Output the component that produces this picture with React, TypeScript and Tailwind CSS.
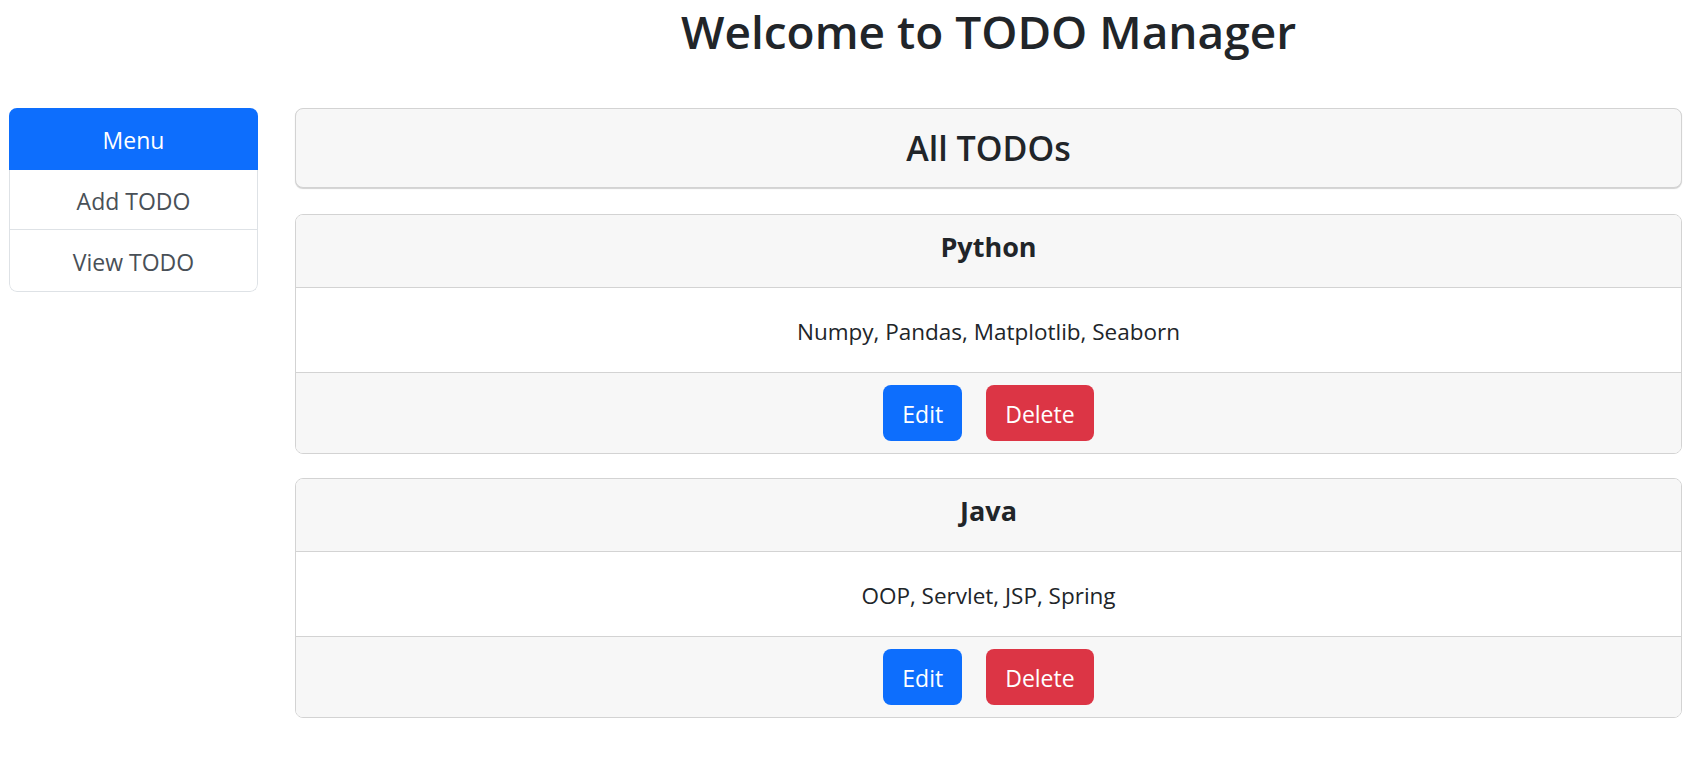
import React from "react";

const todos = [
  { title: "Python", content: "Numpy, Pandas, Matplotlib, Seaborn" },
  { title: "Java", content: "OOP, Servlet, JSP, Spring" },
];

const TodoCard = ({ title, content }: { title: string; content: string }) => {
  return (
    <div className="mb-[24px] overflow-hidden rounded-[8px] border border-[#d3d3d3]">
      <div className="flex h-[73px] items-center justify-center border-b border-[#d3d3d3] bg-[#f7f7f7] pb-[8px]">
        <h4 className="text-[27px] font-bold leading-[34px]">{title}</h4>
      </div>
      <div className="flex h-[85px] items-center justify-center border-b border-[#d3d3d3] bg-white pt-[4px]">
        <p className="text-[22.5px] leading-[34px]">{content}</p>
      </div>
      <div className="flex h-[80px] items-center justify-center gap-[24px] bg-[#f7f7f7]">
        <button className="h-[56px] rounded-[8px] bg-[#0d6efd] px-[19px] pt-[2px] text-[23px] text-white">
          Edit
        </button>
        <button className="h-[56px] rounded-[8px] bg-[#dc3545] px-[19px] pt-[2px] text-[23px] text-white">
          Delete
        </button>
      </div>
    </div>
  );
};

const App = () => {
  return (
    <div className="min-h-screen bg-white font-['Open_Sans','Noto_Sans',sans-serif] text-[#212529]">
      <div className="flex pr-[25px]">
        {/* side menu */}
        <aside className="w-[295px] shrink-0 pl-[9px] pr-[37px] pt-[108px]">
          <div className="overflow-hidden rounded-[8px] text-[23px]">
            <div className="flex h-[62px] items-center justify-center bg-[#0d6efd] pt-[3px] text-white">
              Menu
            </div>
            <div className="rounded-b-[8px] border border-t-0 border-[#dee2e6] text-[#495057]">
              <a href="#" className="flex h-[60px] items-center justify-center border-b border-[#dee2e6] pt-[3px]">
                Add TODO
              </a>
              <a href="#" className="flex h-[61px] items-center justify-center pt-[3px]">
                View TODO
              </a>
            </div>
          </div>
        </aside>

        <main className="min-w-0 flex-1">
          <h1 className="h-[108px] pt-[1px] text-center text-[46px] font-semibold leading-[60px]">
            Welcome to TODO Manager
          </h1>

          <div className="mb-[26px] flex h-[80px] items-center justify-center rounded-[8px] border border-[#d3d3d3] bg-[#f7f7f7] shadow-[0_1px_1px_rgba(0,0,0,0.18)]">
            <h3 className="text-[34px] font-semibold leading-[42px]">All TODOs</h3>
          </div>

          {todos.map((todo) => (
            <TodoCard key={todo.title} title={todo.title} content={todo.content} />
          ))}
        </main>
      </div>
    </div>
  );
};

export default App;
